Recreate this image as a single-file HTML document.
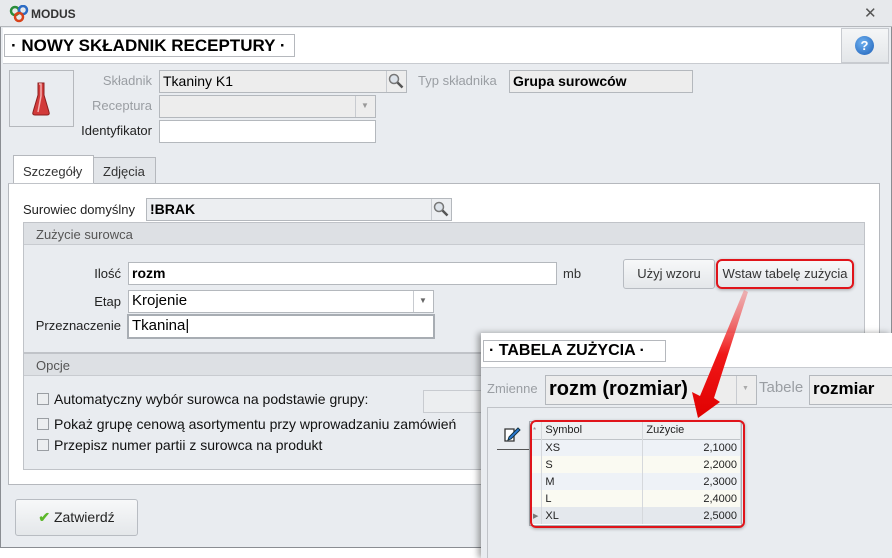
<!DOCTYPE html>
<html><head><meta charset="utf-8"><style>
*{box-sizing:border-box;margin:0;padding:0}
body{width:892px;height:558px;overflow:hidden;background:#fff;font-family:"Liberation Sans",sans-serif;font-size:13px;position:relative;color:#000}
.a{position:absolute}
.inp{position:absolute;border:1px solid #b4b8bd;background:#fff;font-size:14px;padding:2px 3px;line-height:16px}
.g{background:#ededed}
.lbl{position:absolute;font-size:13px;color:#222;text-align:right}
.dis{color:#9a9ea3}
.btn{position:absolute;border:1px solid #b8bcc2;border-radius:3px;background:linear-gradient(#f7f8f9,#e4e7ea);font-size:13px;color:#333;text-align:center}
.cb{position:absolute;width:12px;height:12px;border:1px solid #9a9ea3;background:#eceef0}
.opt{position:absolute;font-size:14px;color:#111;left:54px}
td{border-right:1px solid #d5d8dc;font-size:11px;height:17px;padding:0 3px;color:#222}
</style></head><body>
<div class="a" style="left:0;top:0;width:892px;height:548px;background:#e9ecf0;border:1px solid #8a8d92"></div>
<div class="a" style="left:0;top:0;width:892px;height:27px;background:#e7e9ec;border-bottom:1px solid #b5b8bc"></div>
<svg class="a" style="left:9px;top:5px" width="22" height="18"><circle cx="6" cy="6" r="4" fill="none" stroke="#2a8d3a" stroke-width="2.5"/><circle cx="14" cy="5" r="4" fill="none" stroke="#2c6cc5" stroke-width="2.5"/><circle cx="10" cy="12" r="4" fill="none" stroke="#d8431b" stroke-width="2.5"/></svg>
<div class="a" style="left:31px;top:7px;font-size:12px;font-weight:bold;color:#333">MODUS</div>
<div class="a" style="left:864px;top:4px;font-size:15px;color:#555">✕</div>
<div class="a" style="left:3px;top:28px;width:886px;height:36px;background:#fff;border-bottom:1px solid #c8cbd0"></div>
<div class="a" style="left:4px;top:34px;width:291px;height:23px;border:1px solid #b5b8bd;font-weight:bold;font-size:17px;padding:1px 6px;background:#fff;white-space:nowrap">· NOWY SKŁADNIK RECEPTURY ·</div>
<div class="a" style="left:841px;top:28px;width:48px;height:35px;background:linear-gradient(#f5f6f7,#e3e6e9);border:1px solid #c8cbd0"></div>
<div class="a" style="left:855px;top:36px;width:19px;height:19px;border-radius:50%;background:radial-gradient(circle at 40% 35%,#6fb1f0,#1c5fb8);color:#fff;font-weight:bold;font-size:13px;text-align:center;line-height:19px">?</div>
<div class="a" style="left:9px;top:70px;width:65px;height:57px;border:1px solid #b5b8bd;background:#e9ecf0"></div>
<svg class="a" style="left:31px;top:82px" width="20" height="34"><path d="M7 1h6v12l5 17q1 3-2 3H4q-3 0-2-3l5-17z" fill="#d23a3a" stroke="#8a1f1f"/><path d="M8 2h2v12l-3 16" stroke="#f3b0b0" stroke-width="1.5" fill="none"/></svg>
<div class="lbl dis" style="left:60px;width:92px;top:73px">Składnik</div>
<div class="inp g" style="left:159px;top:70px;width:248px;height:23px">Tkaniny K1</div>
<div class="a" style="left:386px;top:71px;width:20px;height:21px;border-left:1px solid #c8cbd0"></div>
<svg class="a" style="left:388px;top:73px" width="17" height="17"><circle cx="6" cy="6" r="4.5" fill="#dde3ea" stroke="#777" stroke-width="1.5"/><path d="M9.5 9.5l5 5" stroke="#555" stroke-width="2.5"/></svg>
<div class="lbl dis" style="left:418px;top:73px">Typ składnika</div>
<div class="inp g" style="left:509px;top:70px;width:184px;height:23px;font-weight:bold">Grupa surowców</div>
<div class="lbl dis" style="left:60px;width:92px;top:98px">Receptura</div>
<div class="inp g" style="left:159px;top:95px;width:217px;height:23px"></div>
<div class="a" style="left:355px;top:96px;width:1px;height:21px;background:#c8cbd0"></div>
<div class="a" style="left:361px;top:101px;font-size:8px;color:#999">▼</div>
<div class="lbl" style="left:60px;width:92px;top:123px">Identyfikator</div>
<div class="inp" style="left:159px;top:120px;width:217px;height:23px"></div>
<div class="a" style="left:13px;top:155px;width:81px;height:30px;background:#fff;border:1px solid #b5b8bd;border-bottom:none;padding:8px 9px;font-size:13px;color:#333">Szczegóły</div>
<div class="a" style="left:93px;top:157px;width:63px;height:27px;background:#e2e5e9;border:1px solid #b5b8bd;padding:6px 9px;font-size:13px;color:#333">Zdjęcia</div>
<div class="a" style="left:8px;top:183px;width:872px;height:302px;background:#fff;border:1px solid #b5b8bd;border-top-color:#c0c3c8"></div>
<div class="a" style="left:94px;top:183px;width:786px;height:1px;background:#b5b8bd"></div>
<div class="a" style="left:23px;top:202px;font-size:13px;color:#222">Surowiec domyślny</div>
<div class="inp g" style="left:146px;top:198px;width:306px;height:23px;font-weight:bold;background:#eceef1">!BRAK</div>
<div class="a" style="left:431px;top:199px;width:20px;height:21px;border-left:1px solid #c8cbd0"></div>
<svg class="a" style="left:433px;top:201px" width="17" height="17"><circle cx="6" cy="6" r="4.5" fill="#dde3ea" stroke="#777" stroke-width="1.5"/><path d="M9.5 9.5l5 5" stroke="#555" stroke-width="2.5"/></svg>
<div class="a" style="left:23px;top:222px;width:842px;height:131px;background:#e9ecf0;border:1px solid #c0c3c8"></div>
<div class="a" style="left:24px;top:223px;width:840px;height:22px;background:#dde0e4;border-bottom:1px solid #c8cbd0;padding:4px 12px;color:#555;font-size:13px">Zużycie surowca</div>
<div class="lbl" style="left:60px;width:61px;top:266px">Ilość</div>
<div class="inp" style="left:128px;top:262px;width:429px;height:23px;font-weight:bold">rozm</div>
<div class="a" style="left:563px;top:266px;color:#333">mb</div>
<div class="btn" style="left:623px;top:259px;width:92px;height:30px;line-height:28px">Użyj wzoru</div>
<div class="btn" style="left:716px;top:259px;width:138px;height:30px;line-height:26px;border:2px solid #e0141a;border-radius:6px;box-shadow:0 1px 3px rgba(0,0,0,.3)">Wstaw tabelę zużycia</div>
<div class="lbl" style="left:60px;width:61px;top:294px">Etap</div>
<div class="inp" style="left:128px;top:290px;width:306px;height:23px;font-size:15px">Krojenie</div>
<div class="a" style="left:413px;top:291px;width:1px;height:21px;background:#c8cbd0"></div>
<div class="a" style="left:419px;top:296px;font-size:8px;color:#666">▼</div>
<div class="lbl" style="left:20px;width:101px;top:318px">Przeznaczenie</div>
<div class="inp" style="left:127px;top:314px;width:308px;height:25px;border:2px solid #a8adb3;font-size:15px">Tkanina|</div>
<div class="a" style="left:23px;top:353px;width:842px;height:117px;background:#e9ecf0;border:1px solid #c0c3c8"></div>
<div class="a" style="left:24px;top:354px;width:840px;height:22px;background:#dde0e4;border-bottom:1px solid #c8cbd0;padding:4px 12px;color:#555;font-size:13px">Opcje</div>
<div class="cb" style="left:37px;top:393px"></div><div class="opt" style="top:391px">Automatyczny wybór surowca na podstawie grupy:</div>
<div class="a" style="left:423px;top:390px;width:70px;height:23px;border:1px solid #c8cbd0;background:#eceef0"></div>
<div class="cb" style="left:37px;top:418px"></div><div class="opt" style="top:416px;white-space:nowrap">Pokaż grupę cenową asortymentu przy wprowadzaniu zamówień</div>
<div class="cb" style="left:37px;top:439px"></div><div class="opt" style="top:437px">Przepisz numer partii z surowca na produkt</div>
<div class="btn" style="left:15px;top:499px;width:123px;height:37px;line-height:35px;font-size:14px;color:#222"><span style="color:#5cb82a;font-weight:bold">✔</span> Zatwierdź</div>
<!-- overlay -->
<div class="a" style="left:481px;top:333px;width:411px;height:225px;background:#e9ecf0;box-shadow:-3px 0 6px rgba(0,0,0,.35)"></div>
<div class="a" style="left:481px;top:333px;width:411px;height:35px;background:#fff;border-bottom:1px solid #c8cbd0"></div>
<div class="a" style="left:483px;top:340px;width:183px;height:22px;border:1px solid #b5b8bd;font-weight:bold;font-size:16px;padding:1px 5px;white-space:nowrap">· TABELA ZUŻYCIA ·</div>
<div class="a dis" style="left:487px;top:381px;font-size:13px">Zmienne</div>
<div class="inp g" style="left:545px;top:375px;width:212px;height:30px;font-size:20px;font-weight:bold;line-height:22px">rozm (rozmiar)</div>
<div class="a" style="left:736px;top:376px;width:1px;height:28px;background:#c8cbd0"></div>
<div class="a" style="left:742px;top:385px;font-size:7px;color:#aaa">▼</div>
<div class="a dis" style="left:759px;top:379px;font-size:15px">Tabele</div>
<div class="inp g" style="left:809px;top:375px;width:90px;height:30px;font-size:17px;font-weight:bold;line-height:22px">rozmiar</div>
<div class="a" style="left:487px;top:407px;width:405px;height:151px;border:1px solid #c0c3c8;border-right:none;border-bottom:none"></div>
<svg class="a" style="left:503px;top:425px" width="18" height="18"><path d="M2 4h9v12H2z" fill="#fff" stroke="#333" stroke-width="1.3"/><path d="M6 12l9-9 2 2-9 9-3 1z" fill="#2a7bd6" stroke="#134"/></svg>
<div class="a" style="left:497px;top:449px;width:32px;height:1px;background:#555"></div>
<div class="a" style="left:529px;top:421px;width:213px;height:105px;border:1px solid #aab0b6;background:#fff"></div>
<table class="a" style="left:530px;top:422px;border-collapse:collapse;width:211px">
<tr style="background:#eef0f2;border-bottom:1px solid #c0c4c8"><td style="width:9px;font-size:8px;color:#888">*</td><td style="width:101px">Symbol</td><td>Zużycie</td></tr>
<tr style="background:#eef2f7"><td></td><td>XS</td><td style="text-align:right">2,1000</td></tr>
<tr style="background:#fafaf2"><td></td><td>S</td><td style="text-align:right">2,2000</td></tr>
<tr style="background:#eef2f7"><td></td><td>M</td><td style="text-align:right">2,3000</td></tr>
<tr style="background:#fafaf2"><td></td><td>L</td><td style="text-align:right">2,4000</td></tr>
<tr style="background:#e4e8ed"><td style="font-size:7px;color:#777">▶</td><td>XL</td><td style="text-align:right">2,5000</td></tr>
</table>
<div class="a" style="left:530px;top:420px;width:215px;height:108px;border:2px solid #e0141a;border-radius:6px;box-shadow:0 1px 3px rgba(0,0,0,.3)"></div>
<svg class="a" style="left:0;top:0" width="892" height="558"><defs><linearGradient id="ar" x1="0" y1="0" x2="0" y2="1"><stop offset="0" stop-color="#f07a7a" stop-opacity=".5"/><stop offset=".5" stop-color="#f01818"/><stop offset="1" stop-color="#e00000"/></linearGradient></defs>
<path d="M744 290L748 292L714 398L720 402L698 418L692 392L700 396Z" fill="url(#ar)"/></svg>
</body></html>
